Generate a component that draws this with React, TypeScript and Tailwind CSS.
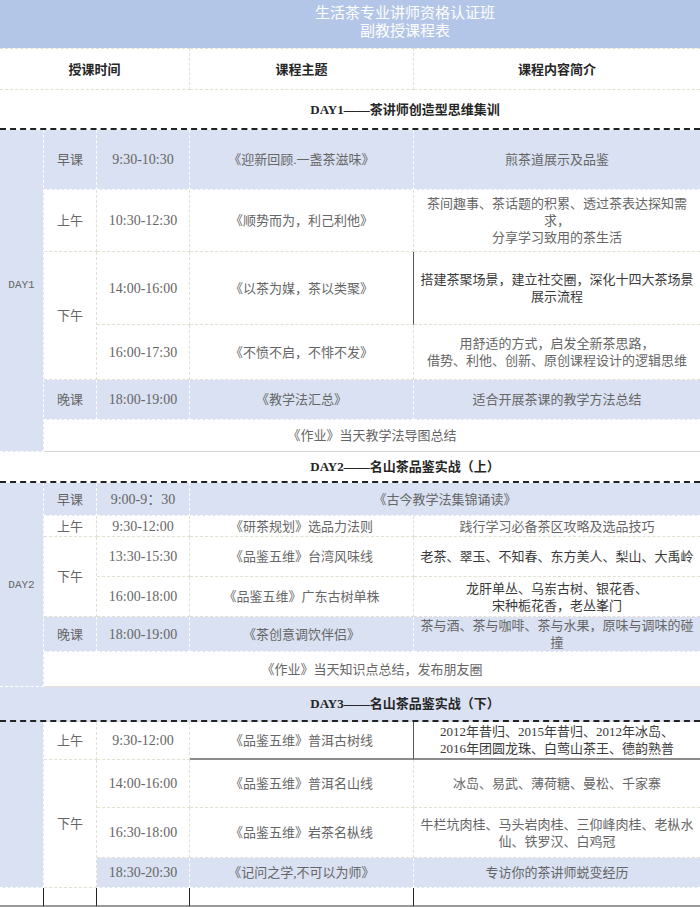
import React from "react";

type CellProps = { c?: string; children?: React.ReactNode };

const Cell = ({ c = "", children }: CellProps) => (
  <div className={`flex items-center justify-center text-center whitespace-nowrap ${c}`}>
    <div>{children}</div>
  </div>
);

// white cell / blue cell borders
const W = "border-r border-b border-dashed border-[#e3dfd2]";
const WL = "border-b border-dashed border-[#e3dfd2]";
const B = "bg-[#d9e1f2] border-r border-b border-dashed border-white";
const BL = "bg-[#d9e1f2] border-b border-dashed border-white";
const T = "text-[14px]";
const DARK = "text-[#3a3a3a]";

export default function App() {
  return (
    <div
      className="w-[700px] h-[907px] bg-white text-[13px] leading-[17px] text-[#666666] overflow-hidden"
      style={{ fontFamily: '"Liberation Serif", "Noto Sans CJK SC", serif' }}
    >
      <div className="grid grid-cols-[44px_53px_93px_224px_286px] grid-rows-[48px_42px_40px_60px_62px_73px_55px_40px_32px_31px_33px_21px_40px_40px_35px_35px_35px_38px_48px_50px_30px_19px]">
        {/* title */}
        <Cell c="col-start-1 col-span-5 row-start-1 bg-[#b4c6e7] text-white text-[15px] leading-[18px] pl-[110px] pb-[4px]">
          生活茶专业讲师资格认证班
          <br />
          副教授课程表
        </Cell>

        {/* column heads */}
        <Cell c={`col-start-1 col-span-3 row-start-2 font-bold text-[#262626] border-t ${W}`}>授课时间</Cell>
        <Cell c={`col-start-4 row-start-2 font-bold text-[#262626] border-t ${W}`}>课程主题</Cell>
        <Cell c={`col-start-5 row-start-2 font-bold text-[#262626] border-t ${WL}`}>课程内容简介</Cell>

        {/* DAY1 */}
        <Cell c="col-start-1 col-span-5 row-start-3 font-bold text-[#262626] pl-[110px] border-b-2 border-dashed border-[#222]">
          DAY1——茶讲师创造型思维集训
        </Cell>
        <Cell c={`col-start-1 row-start-4 row-span-6 pb-[12px] ${B}`}>
          <span className="text-[11px]" style={{ fontFamily: '"Liberation Mono", monospace' }}>DAY1</span>
        </Cell>

        <Cell c={`col-start-2 row-start-4 ${B}`}>早课</Cell>
        <Cell c={`col-start-3 row-start-4 ${T} ${B}`}>9:30-10:30</Cell>
        <Cell c={`col-start-4 row-start-4 ${B}`}>《迎新回顾.一盏茶滋味》</Cell>
        <Cell c={`col-start-5 row-start-4 ${BL}`}>煎茶道展示及品鉴</Cell>

        <Cell c={`col-start-2 row-start-5 ${W}`}>上午</Cell>
        <Cell c={`col-start-3 row-start-5 ${T} ${W}`}>10:30-12:30</Cell>
        <Cell c={`col-start-4 row-start-5 ${W}`}>《顺势而为，利己利他》</Cell>
        <Cell c={`col-start-5 row-start-5 ${WL}`}>
          茶间趣事、茶话题的积累、透过茶表达探知需
          <br />
          求，
          <br />
          分享学习致用的茶生活
        </Cell>

        <Cell c={`col-start-2 row-start-6 row-span-2 ${W}`}>下午</Cell>
        <Cell c={`col-start-3 row-start-6 ${T} ${W}`}>14:00-16:00</Cell>
        <Cell c={`col-start-4 row-start-6 ${W} border-r-[1.5px] border-r-[#555] [border-right-style:solid]`}>
          《以茶为媒，茶以类聚》
        </Cell>
        <Cell c={`col-start-5 row-start-6 ${WL} ${DARK}`}>
          搭建茶聚场景，建立社交圈，深化十四大茶场景
          <br />
          展示流程
        </Cell>

        <Cell c={`col-start-3 row-start-7 ${T} ${W}`}>16:00-17:30</Cell>
        <Cell c={`col-start-4 row-start-7 ${W}`}>《不愤不启，不悱不发》</Cell>
        <Cell c={`col-start-5 row-start-7 ${WL}`}>
          用舒适的方式，启发全新茶思路，
          <br />
          借势、利他、创新、原创课程设计的逻辑思维
        </Cell>

        <Cell c={`col-start-2 row-start-8 ${B}`}>晚课</Cell>
        <Cell c={`col-start-3 row-start-8 ${T} ${B}`}>18:00-19:00</Cell>
        <Cell c={`col-start-4 row-start-8 ${B}`}>《教学法汇总》</Cell>
        <Cell c={`col-start-5 row-start-8 ${BL}`}>适合开展茶课的教学方法总结</Cell>

        <Cell c="col-start-2 col-span-4 row-start-9 border-b border-[#d4d4d4]">《作业》当天教学法导图总结</Cell>

        {/* DAY2 */}
        <Cell c="col-start-1 col-span-5 row-start-10 font-bold text-[#262626] pl-[110px] border-b-2 border-dashed border-[#222]">
          DAY2——名山茶品鉴实战（上）
        </Cell>
        <Cell c={`col-start-1 row-start-11 row-span-6 ${B}`}>
          <span className="text-[11px]" style={{ fontFamily: '"Liberation Mono", monospace' }}>DAY2</span>
        </Cell>

        <Cell c={`col-start-2 row-start-11 ${B}`}>早课</Cell>
        <Cell c={`col-start-3 row-start-11 ${T} ${B}`}>9:00-9：30</Cell>
        <Cell c={`col-start-4 col-span-2 row-start-11 ${BL}`}>《古今教学法集锦诵读》</Cell>

        <Cell c={`col-start-2 row-start-12 ${W}`}>上午</Cell>
        <Cell c={`col-start-3 row-start-12 ${T} ${W}`}>9:30-12:00</Cell>
        <Cell c={`col-start-4 row-start-12 ${W}`}>《研茶规划》选品力法则</Cell>
        <Cell c={`col-start-5 row-start-12 ${WL}`}>践行学习必备茶区攻略及选品技巧</Cell>

        <Cell c={`col-start-2 row-start-13 row-span-2 ${W}`}>下午</Cell>
        <Cell c={`col-start-3 row-start-13 ${T} ${W}`}>13:30-15:30</Cell>
        <Cell c={`col-start-4 row-start-13 ${W}`}>《品鉴五维》台湾风味线</Cell>
        <Cell c={`col-start-5 row-start-13 ${WL} ${DARK}`}>老茶、翠玉、不知春、东方美人、梨山、大禹岭</Cell>

        <Cell c={`col-start-3 row-start-14 ${T} ${W}`}>16:00-18:00</Cell>
        <Cell c={`col-start-4 row-start-14 ${W}`}>《品鉴五维》广东古树单株</Cell>
        <Cell c={`col-start-5 row-start-14 ${WL} ${DARK}`}>
          龙肝单丛、乌岽古树、银花香、
          <br />
          宋种栀花香，老丛峯门
        </Cell>

        <Cell c={`col-start-2 row-start-15 ${B}`}>晚课</Cell>
        <Cell c={`col-start-3 row-start-15 ${T} ${B}`}>18:00-19:00</Cell>
        <Cell c={`col-start-4 row-start-15 ${B}`}>《茶创意调饮伴侣》</Cell>
        <Cell c={`col-start-5 row-start-15 ${BL}`}>
          茶与酒、茶与咖啡、茶与水果，原味与调味的碰
          <br />
          撞
        </Cell>

        <Cell c="col-start-2 col-span-4 row-start-16 border-b border-[#e3dfd2]">《作业》当天知识点总结，发布朋友圈</Cell>

        {/* DAY3 */}
        <Cell c="col-start-1 col-span-5 row-start-17 bg-[#d9e1f2] font-bold text-[#262626] pl-[110px] border-b-2 border-dashed border-[#222]">
          DAY3——名山茶品鉴实战（下）
        </Cell>
        <Cell c={`col-start-1 row-start-18 row-span-4 ${B}`} />

        <Cell c={`col-start-2 row-start-18 ${W}`}>上午</Cell>
        <Cell c={`col-start-3 row-start-18 ${T} ${W}`}>9:30-12:00</Cell>
        <Cell c={`col-start-4 row-start-18 border-r-[1.5px] border-r-[#555] border-b-2 border-b-[#8c8c8c]`}>
          《品鉴五维》普洱古树线
        </Cell>
        <Cell c={`col-start-5 row-start-18 border-b-2 border-b-[#8c8c8c] ${DARK}`}>
          2012年昔归、2015年昔归、2012年冰岛、
          <br />
          2016年团圆龙珠、白莺山茶王、德韵熟普
        </Cell>

        <Cell c={`col-start-2 row-start-19 row-span-3 ${W}`}>下午</Cell>
        <Cell c={`col-start-3 row-start-19 ${T} ${W}`}>14:00-16:00</Cell>
        <Cell c={`col-start-4 row-start-19 ${W}`}>《品鉴五维》普洱名山线</Cell>
        <Cell c={`col-start-5 row-start-19 ${WL}`}>冰岛、易武、薄荷糖、曼松、千家寨</Cell>

        <Cell c={`col-start-3 row-start-20 ${T} ${W}`}>16:30-18:00</Cell>
        <Cell c={`col-start-4 row-start-20 ${W}`}>《品鉴五维》岩茶名枞线</Cell>
        <Cell c={`col-start-5 row-start-20 ${WL}`}>
          牛栏坑肉桂、马头岩肉桂、三仰峰肉桂、老枞水
          <br />
          仙、铁罗汉、白鸡冠
        </Cell>

        <Cell c={`col-start-3 row-start-21 ${T} ${B}`}>18:30-20:30</Cell>
        <Cell c={`col-start-4 row-start-21 ${B}`}>《记问之学,不可以为师》</Cell>
        <Cell c={`col-start-5 row-start-21 ${BL}`}>专访你的茶讲师蜕变经历</Cell>

        {/* bottom strip */}
        <div className="col-start-1 row-start-22 border-r border-r-[#222] border-b-2 border-b-[#999]" />
        <div className="col-start-2 row-start-22 border-r border-r-[#222] border-b-2 border-b-[#999]" />
        <div className="col-start-3 row-start-22 border-r border-r-[#222] border-b-2 border-b-[#999]" />
        <div className="col-start-4 row-start-22 border-r border-r-[#222] border-b-2 border-b-[#999]" />
        <div className="col-start-5 row-start-22 border-b-2 border-b-[#999]" />
      </div>
    </div>
  );
}
